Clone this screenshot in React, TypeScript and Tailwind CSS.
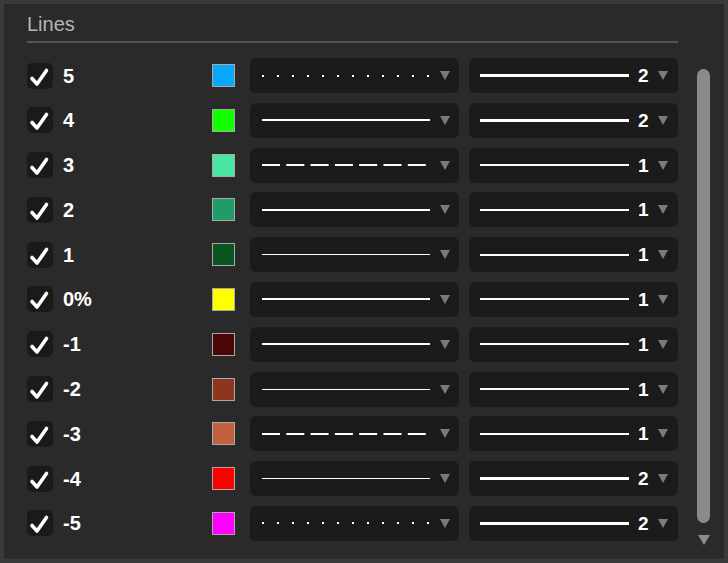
import React from 'react';

type LineStyle = 'dotted' | 'dashed' | 'solid-thick' | 'solid-thin';

interface LineRow {
  label: string;
  color: string;
  style: LineStyle;
  width: number;
}

const rows: LineRow[] = [
  { label: '5', color: '#0aa8fa', style: 'dotted', width: 2 },
  { label: '4', color: '#12ff00', style: 'solid-thick', width: 2 },
  { label: '3', color: '#48e6a2', style: 'dashed', width: 1 },
  { label: '2', color: '#1f9c68', style: 'solid-thick', width: 1 },
  { label: '1', color: '#0b5522', style: 'solid-thin', width: 1 },
  { label: '0%', color: '#ffff00', style: 'solid-thick', width: 1 },
  { label: '-1', color: '#4d0606', style: 'solid-thick', width: 1 },
  { label: '-2', color: '#8c3620', style: 'solid-thin', width: 1 },
  { label: '-3', color: '#c2603f', style: 'dashed', width: 1 },
  { label: '-4', color: '#ff0000', style: 'solid-thin', width: 2 },
  { label: '-5', color: '#ff00ff', style: 'dotted', width: 2 },
];

function Arrow() {
  return (
    <svg width="10" height="9" viewBox="0 0 10 9" className="shrink-0">
      <polygon points="0,0 10,0 5,9" fill="#7b7b7b" />
    </svg>
  );
}

function StylePreview({ style }: { style: LineStyle }) {
  if (style === 'dotted') {
    return (
      <svg width="168" height="4" viewBox="0 0 168 4">
        <line x1="0" y1="2" x2="168" y2="2" stroke="#ffffff" strokeWidth="2" strokeDasharray="2 13" />
      </svg>
    );
  }
  if (style === 'dashed') {
    return (
      <svg width="168" height="4" viewBox="0 0 168 4">
        <line x1="0" y1="2" x2="168" y2="2" stroke="#ffffff" strokeWidth="2" strokeDasharray="18 6.3" />
      </svg>
    );
  }
  return (
    <div
      className={`w-[168px] bg-white ${style === 'solid-thick' ? 'h-[2px]' : 'h-[1px]'}`}
    />
  );
}

function Check() {
  return (
    <svg width="26" height="26" viewBox="0 0 26 26">
      <polyline
        points="5,15.5 10,21 19.5,7.5"
        fill="none"
        stroke="#ffffff"
        strokeWidth="3.6"
        strokeLinecap="round"
        strokeLinejoin="round"
      />
    </svg>
  );
}

export default function App() {
  return (
    <div
      className="w-[728px] h-[563px] bg-[#2a2a2a] border-4 border-[#3b3b3b] flex"
      style={{ fontFamily: '"Liberation Sans", Arial, sans-serif' }}
    >
      <div className="ml-[23px] w-[651px] flex flex-col">
        <div className="mt-[9px] pb-[6px] border-b-2 border-[#555555]">
          <div className="text-[20px] leading-[22px] text-[#b5b5b5]">Lines</div>
        </div>
        <div className="mt-[15px] flex flex-col gap-[9.8px]">
          {rows.map((row) => (
            <div key={row.label} className="flex items-center h-[35px]">
              <div className="w-[26px] h-[26px] rounded-[5px] bg-[#1a1a1a] flex items-center justify-center">
                <Check />
              </div>
              <div className="ml-[10px] w-[149px] text-[20px] font-bold text-white leading-none">
                {row.label}
              </div>
              <div
                className="w-[23px] h-[23px] border border-[#a9a9a9]"
                style={{ backgroundColor: row.color }}
              />
              <div className="ml-[15px] w-[209px] h-[35px] rounded-[6px] bg-[#1b1b1b] flex items-center pl-[12px] pr-[9px]">
                <StylePreview style={row.style} />
                <div className="flex-1" />
                <Arrow />
              </div>
              <div className="ml-[10px] w-[209px] h-[35px] rounded-[6px] bg-[#1b1b1b] flex items-center pl-[11px] pr-[10px]">
                <div
                  className={`w-[149px] bg-white ${row.width === 2 ? 'h-[3px]' : 'h-[2px]'}`}
                />
                <span className="ml-[9px] text-[19px] font-bold text-white leading-none">
                  {row.width}
                </span>
                <div className="flex-1" />
                <Arrow />
              </div>
            </div>
          ))}
        </div>
      </div>
      <div className="ml-[19px] w-[13px] flex flex-col items-center">
        <div className="mt-[65px] w-[13px] h-[454px] rounded-full bg-[#8a8a8a]" />
        <div className="mt-[12px]">
          <svg width="12" height="10" viewBox="0 0 12 10">
            <polygon points="0,0 12,0 6,10" fill="#8a8a8a" />
          </svg>
        </div>
      </div>
    </div>
  );
}
